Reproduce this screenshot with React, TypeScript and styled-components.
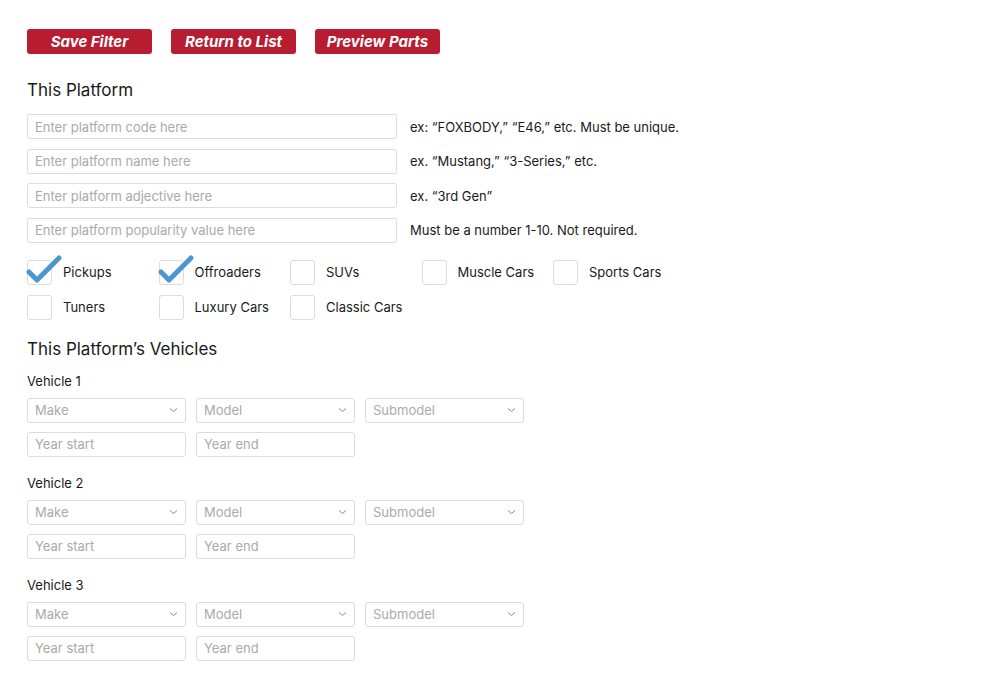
import React from "react";
import styled, { createGlobalStyle } from "styled-components";

const Global = createGlobalStyle`
  body { margin: 0; font-family: Inter, "Noto Sans", sans-serif; color: #1a1a1a; background: #fff; }
`;
const Page = styled.div`padding: 29px 27px;`;
const Toolbar = styled.div`display: flex; gap: 19px;`;
const Btn = styled.button`
  width: 125px; height: 25px; border: none; border-radius: 3px; background: #b71c30;
  color: #fff; font: italic 700 15px Inter, sans-serif; padding: 0; cursor: pointer;
`;
const H2 = styled.h2<{ $top: number; $bottom: number }>`font-size: 17px; font-weight: 400; margin: ${p => p.$top}px 0 ${p => p.$bottom}px; line-height: 20px;`;
const FieldRow = styled.div`display: flex; align-items: center; gap: 13px; margin-bottom: 9.5px;`;
const Input = styled.input<{ $w?: number }>`
  box-sizing: border-box; width: ${p => p.$w ?? 370}px; height: 25px; border: 1px solid #dcdcdc; border-radius: 3px;
  padding: 0 7px; font: 13px Inter, sans-serif; color: #333;
  &::placeholder { color: #aaa; }
`;
const Hint = styled.span`font-size: 13px;`;
const CheckGrid = styled.div`display: grid; grid-template-columns: repeat(5, 131.5px); row-gap: 10px; margin-top: 17px;`;
const CheckItem = styled.label`display: flex; align-items: center; gap: 11px; font-size: 13px; height: 25px;`;
const Box = styled.span`
  position: relative; box-sizing: border-box; width: 25px; height: 25px; border: 1px solid #dcdcdc; border-radius: 3px; flex: none;
`;
const Tick = styled.svg`position: absolute; left: -2px; top: -6px;`;
const VLabel = styled.div`font-size: 13px; margin: 0 0 9px;`;
const Group = styled.div`margin-bottom: 18px;`;
const Row = styled.div`display: flex; gap: 10px; margin-bottom: 9px;`;
const SelectBox = styled.div`
  box-sizing: border-box; width: 159px; height: 25px; border: 1px solid #dcdcdc; border-radius: 3px;
  padding: 0 7px; display: flex; align-items: center; justify-content: space-between; font-size: 13px; color: #aaa;
`;

const checks: [string, boolean][] = [
  ["Pickups", true], ["Offroaders", true], ["SUVs", false], ["Muscle Cars", false], ["Sports Cars", false],
  ["Tuners", false], ["Luxury Cars", false], ["Classic Cars", false],
];
const fields = [
  ["Enter platform code here", "ex: “FOXBODY,” “E46,” etc. Must be unique."],
  ["Enter platform name here", "ex. “Mustang,” “3-Series,” etc."],
  ["Enter platform adjective here", "ex. “3rd Gen”"],
  ["Enter platform popularity value here", "Must be a number 1-10. Not required."],
];
const Chevron = () => (
  <svg width="9" height="6" viewBox="0 0 9 6"><path d="M1 1.5l3.5 3 3.5-3" stroke="#888" fill="none" strokeWidth="1" /></svg>
);

export default function App() {
  return (
    <Page>
      <Global />
      <Toolbar>
        <Btn>Save Filter</Btn><Btn>Return to List</Btn><Btn>Preview Parts</Btn>
      </Toolbar>
      <H2 $top={26} $bottom={14}>This Platform</H2>
      {fields.map(([p, h]) => (
        <FieldRow key={p}><Input placeholder={p} /><Hint>{h}</Hint></FieldRow>
      ))}
      <CheckGrid>
        {checks.map(([l, c]) => (
          <CheckItem key={l}>
            <Box>{c && (
              <Tick width="36" height="30" viewBox="0 0 36 30">
                <path d="M3 17l8 8L33 3" stroke="#4a97cf" strokeWidth="5" fill="none" strokeLinecap="round" strokeLinejoin="round" />
              </Tick>
            )}</Box>
            {l}
          </CheckItem>
        ))}
      </CheckGrid>
      <H2 $top={19} $bottom={14}>This Platform’s Vehicles</H2>
      {[1, 2, 3].map(n => (
        <Group key={n}>
          <VLabel>Vehicle {n}</VLabel>
          <Row>
            {["Make", "Model", "Submodel"].map(s => <SelectBox key={s}>{s}<Chevron /></SelectBox>)}
          </Row>
          <Row>
            <Input $w={159} placeholder="Year start" /><Input $w={159} placeholder="Year end" />
          </Row>
        </Group>
      ))}
    </Page>
  );
}
